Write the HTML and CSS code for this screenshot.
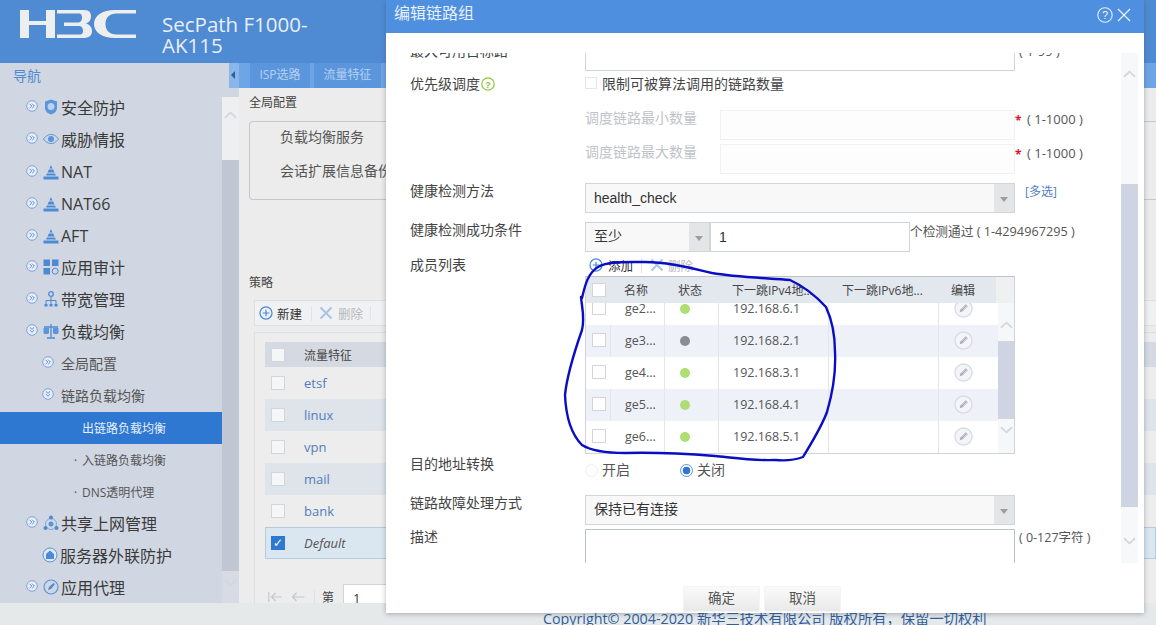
FILE: index.html
```html
<!DOCTYPE html>
<html lang="zh">
<head>
<meta charset="utf-8">
<title>编辑链路组</title>
<link rel="stylesheet" href="styles.css">
</head>
<body>
<svg class="defs" width="0" height="0">
  <defs>
    <symbol id="exp" viewBox="0 0 12 12"><circle cx="6" cy="6" r="5.3" fill="#e8edf5" stroke="#7ba6dc"/><path d="M3.6 3.8 5.8 6 3.6 8.2M6.2 3.8 8.4 6 6.2 8.2" fill="none" stroke="#5f93d6"/></symbol>
    <symbol id="col" viewBox="0 0 12 12"><circle cx="6" cy="6" r="5.3" fill="#e8edf5" stroke="#7ba6dc"/><path d="M3.8 3.4 6 5.4 8.2 3.4M3.8 6.2 6 8.2 8.2 6.2" fill="none" stroke="#5f93d6"/></symbol>
    <symbol id="fw" viewBox="0 0 16 16"><path d="M8 1 9.5 4.5H6.500ZM5.800 5.500H10.200L11.500 8.500H4.500ZM4 9.500H12L13 11.500H3ZM.5 12.500H15.500V15.500H.5Z" fill="#4c8ad6"/></symbol>
    <symbol id="pen" viewBox="0 0 20 20"><circle cx="10" cy="10" r="9" fill="#f4f5f8" stroke="#d8dce4" stroke-width="1.500"/><path d="M6 14 7 10.800 12.300 5.500 14.500 7.700 9.200 13Z" fill="#a3a9b4"/><path d="M8 10.800 12.500 6.300M9.200 11.800 13.500 7.500" stroke="#f4f5f8" stroke-width=".6"/></symbol>
    <symbol id="add" viewBox="0 0 16 16"><circle cx="8" cy="8" r="6.900" fill="none" stroke="#4a8ad4" stroke-width="1.400"/><path d="M8 4.200V11.800M4.200 8H11.800" stroke="#4a8ad4" stroke-width="1.400"/></symbol>
    <symbol id="del" viewBox="0 0 14 14"><path d="M1.500 1.500 12.500 12.500M12.500 1.500 1.500 12.500" stroke="#a9c4e6" stroke-width="2"/></symbol>
    <symbol id="up" viewBox="0 0 14 8"><path d="M1 7 7 1.500 13 7" fill="none" stroke="#d3d7de" stroke-width="2"/></symbol>
    <symbol id="down" viewBox="0 0 14 8"><path d="M1 1 7 6.500 13 1" fill="none" stroke="#d3d7de" stroke-width="2"/></symbol>
    <symbol id="first" viewBox="0 0 14 10"><path d="M.8 0V10M13.500 5H3.500M7.500 1 3.500 5 7.500 9" fill="none" stroke="#c4c8ce" stroke-width="1.200"/></symbol>
    <symbol id="prev" viewBox="0 0 14 10"><path d="M13.500 5H1.500M5.500 1 1.500 5 5.500 9" fill="none" stroke="#c4c8ce" stroke-width="1.200"/></symbol>
  </defs>
</svg>

<header class="topbar">
  <svg class="logo" viewBox="0 0 116 28" width="116" height="28">
    <path d="M0 0H9V11H26V0H35V28H26V15H9V28H0Z" fill="#eceef0"/>
    <path d="M37 0H64C70 0 71 3 71 6.500 71 10 69 12.500 66 13.500 69.500 14.500 72 17 72 21 72 25.500 69 28 63 28H37V24.500H60C62 24.500 63 23 63 21 63 18.500 62 16 59 16H44V12.500H58C61 12.500 62 10 62 7.500 62 5 61 3.500 59 3.500H37Z" fill="#eceef0"/>
    <path d="M116 3.500H97C89 3.500 85.500 8 85.500 14 85.500 20 89 24.500 97 24.500H116V28H95C82 28 74 22 74 14 74 6 82 0 95 0H116Z" fill="#eceef0"/>
  </svg>
  <div class="product">SecPath F1000-<br>AK115</div>
</header>

<div class="main">
  <nav class="sidebar">
    <div class="nav-title">导航</div>
    <ul class="nav-list">
      <li class="nav-item"><svg class="ico-exp"><use href="#exp"/></svg><svg class="ico" viewBox="0 0 16 16"><path d="M8 .5 14 2.500V9C14 12.500 11 14.500 8 15.500 5 14.500 2 12.500 2 9V2.500Z" fill="#5a94da"/><circle cx="8" cy="7.500" r="3.500" fill="#b8d2f0"/></svg>安全防护</li>
      <li class="nav-item"><svg class="ico-exp"><use href="#exp"/></svg><svg class="ico" viewBox="0 0 16 16"><path d="M.5 8C3 4.500 5.500 3.500 8 3.500S13 4.500 15.500 8C13 11.500 10.500 12.500 8 12.500S3 11.500 .5 8Z" fill="none" stroke="#5a94da"/><circle cx="8" cy="8" r="3" fill="#5a94da"/></svg>威胁情报</li>
      <li class="nav-item nav-latin"><svg class="ico-exp"><use href="#exp"/></svg><svg class="ico"><use href="#fw"/></svg>NAT</li>
      <li class="nav-item nav-latin"><svg class="ico-exp"><use href="#exp"/></svg><svg class="ico"><use href="#fw"/></svg>NAT66</li>
      <li class="nav-item nav-latin"><svg class="ico-exp"><use href="#exp"/></svg><svg class="ico"><use href="#fw"/></svg>AFT</li>
      <li class="nav-item"><svg class="ico-exp"><use href="#exp"/></svg><svg class="ico" viewBox="0 0 16 16"><path d="M.5.500H7V7H.5ZM9 .5H15.500V7H9ZM.5 9H7V15.500H.5Z" fill="#4c8ad6"/><circle cx="12.200" cy="12.200" r="3" fill="none" stroke="#4c8ad6"/></svg>应用审计</li>
      <li class="nav-item"><svg class="ico-exp"><use href="#exp"/></svg><svg class="ico" viewBox="0 0 16 16"><circle cx="8" cy="3" r="2.300" fill="none" stroke="#4c8ad6" stroke-width="1.300"/><path d="M8 5.500V9M3 13V9.500H13V13M8 9V13" fill="none" stroke="#4c8ad6"/><path d="M1.500 13H4.500V15.500H1.500ZM6.500 13H9.500V15.500H6.500ZM11.500 13H14.500V15.500H11.500Z" fill="#4c8ad6"/></svg>带宽管理</li>
      <li class="nav-item"><svg class="ico-exp"><use href="#col"/></svg><svg class="ico" viewBox="0 0 16 16"><path d="M8 1V14M4 15H12M1 4H15" stroke="#4c8ad6" stroke-width="1.300"/><path d="M.5 5H6V10C6 11.500 .5 11.500 .5 10ZM10 5H15.500V10C15.500 11.500 10 11.500 10 10Z" fill="#5a94da"/></svg>负载均衡</li>
      <li class="nav-sub"><svg class="ico-exp sub-exp"><use href="#exp"/></svg>全局配置</li>
      <li class="nav-sub"><svg class="ico-exp sub-exp"><use href="#col"/></svg>链路负载均衡</li>
      <li class="nav-leaf nav-active">出链路负载均衡</li>
      <li class="nav-leaf"><span class="dot">·</span>入链路负载均衡</li>
      <li class="nav-leaf"><span class="dot">·</span>DNS透明代理</li>
      <li class="nav-item"><svg class="ico-exp"><use href="#exp"/></svg><svg class="ico" viewBox="0 0 16 16"><circle cx="8" cy="9" r="5.500" fill="none" stroke="#7fa9de"/><circle cx="8" cy="9" r="2.500" fill="#5a94da"/><circle cx="8" cy="2.500" r="2" fill="#4c8ad6"/><circle cx="2.500" cy="13" r="2" fill="#4c8ad6"/><circle cx="13.500" cy="13" r="2" fill="#4c8ad6"/></svg>共享上网管理</li>
      <li class="nav-item nav-noexp"><svg class="ico" viewBox="0 0 16 16"><circle cx="8" cy="8" r="7" fill="#dfe8f4" stroke="#5a94da"/><path d="M8 3.500 12 7V12H4V7Z" fill="#4c8ad6"/></svg>服务器外联防护</li>
      <li class="nav-item"><svg class="ico-exp"><use href="#exp"/></svg><svg class="ico" viewBox="0 0 16 16"><circle cx="8" cy="8" r="7" fill="none" stroke="#5a94da" stroke-width="1.200"/><path d="M5 11 6 8 10.500 4 11.800 5.300 8 10Z" fill="#4c8ad6"/></svg>应用代理</li>
    </ul>
  </nav>

  <div class="side-scroll">
    <div class="ss-gap"></div>
    <div class="ss-track"><svg class="arrow"><use href="#up"/></svg></div>
    <div class="ss-thumb"></div>
    <div class="ss-end"><svg class="arrow"><use href="#down"/></svg></div>
  </div>

  <section class="workspace">
    <div class="tabs">
      <button class="tab-toggle"></button>
      <span class="tab tab-a">ISP选路</span>
      <span class="tab tab-b">流量特征</span>
    </div>
    <div class="page">
      <h3 class="sec-title">全局配置</h3>
      <div class="global-box">
        <div>负载均衡服务</div>
        <div>会话扩展信息备份</div>
      </div>
      <h3 class="sec-title policy-title">策略</h3>
      <div class="policy">
        <div class="toolbar">
          <span class="tool"><svg class="t-ico"><use href="#add"/></svg>新建</span>
          <span class="sep sep-a"></span>
          <span class="tool tool-off"><svg class="t-ico t-del"><use href="#del"/></svg>删除</span>
          <span class="sep"></span>
        </div>
        <div class="table-box">
          <div class="t-row t-head"><i class="cb"></i><span>流量特征</span></div>
          <div class="t-row"><i class="cb"></i><a>etsf</a></div>
          <div class="t-row t-alt"><i class="cb"></i><a>linux</a></div>
          <div class="t-row"><i class="cb"></i><a>vpn</a></div>
          <div class="t-row t-alt"><i class="cb"></i><a>mail</a></div>
          <div class="t-row"><i class="cb"></i><a>bank</a></div>
          <div class="t-row t-sel"><i class="cb cb-on">✓</i><em>Default</em></div>
          <div class="pager"><svg class="pg"><use href="#first"/></svg><svg class="pg"><use href="#prev"/></svg><i class="pg-sep"></i><span>第</span><span class="pg-input">1</span></div>
        </div>
      </div>
    </div>
  </section>
</div>

<footer class="footer">Copyright© 2004-2020 新华三技术有限公司 版权所有，保留一切权利</footer>

<div class="modal">
  <div class="modal-head">
    <span>编辑链路组</span>
    <span class="modal-ctl">
      <svg width="16" height="16" viewBox="0 0 16 16"><circle cx="8" cy="8" r="7.200" fill="none" stroke="#e6eefa" stroke-width="1.100"/><text x="8" y="12" class="q">?</text></svg>
      <svg width="14" height="14" viewBox="0 0 14 14"><path d="M1 1 13 13M13 1 1 13" stroke="#eef3fb" stroke-width="1.200"/></svg>
    </span>
  </div>
  <div class="modal-body">
    <div class="form-clip">
      <div class="form">
        <div class="row row-first"><label>最大可用目标路</label><div class="field"><div class="input h30 w430"></div><span class="hint">( 1-99 )</span></div></div>
        <div class="row row-pri"><label class="lab-mid">优先级调度<svg class="help" viewBox="0 0 14 14"><circle cx="7" cy="7" r="6.200" fill="none" stroke="#8cc63f" stroke-width="1.200"/><text x="7" y="10.500" class="q2">?</text></svg></label><div class="field"><i class="cb cb-light"></i><span class="check-text">限制可被算法调用的链路数量</span></div></div>
        <div class="row row-min"><div class="field"><span class="dim-label">调度链路最小数量</span><div class="input h30 w295 off"></div><span class="req">*</span><span class="hint">( 1-1000 )</span></div></div>
        <div class="row row-max"><div class="field"><span class="dim-label">调度链路最大数量</span><div class="input h30 w295 off"></div><span class="req">*</span><span class="hint">( 1-1000 )</span></div></div>
        <div class="row row-hc"><label>健康检测方法</label><div class="field"><div class="select w430"><span>health_check</span><b class="caret"></b></div><a class="multi">[多选]</a></div></div>
        <div class="row row-ok"><label>健康检测成功条件</label><div class="field"><div class="select w125"><span class="cjk-val">至少</span><b class="caret"></b></div><div class="input h30 w200 val">1</div><span class="hint hint-tight">个检测通过 ( 1-4294967295 )</span></div></div>
        <div class="row row-mem"><label>成员列表</label>
          <div class="members">
            <div class="mem-tools">
              <span class="tool"><svg class="t-ico"><use href="#add"/></svg>添加</span><span class="sep"></span>
              <span class="tool tool-off"><svg class="t-ico"><use href="#del"/></svg>删除</span>
            </div>
            <div class="grid">
              <div class="g-head">
                <i class="cb cb-head"></i><span class="c-name">名称</span><span class="c-state">状态</span><span class="c-v4">下一跳IPv4地...</span><span class="c-v6">下一跳IPv6地...</span><span class="c-edit">编辑</span><span class="c-corner"></span>
              </div>
              <div class="g-wrap">
                <div class="g-rows">
                  <div class="g-row g-first"><span class="c-chk"><i class="cb"></i></span><span class="c-name">ge2...</span><span class="c-state"><i class="led"></i></span><span class="c-v4">192.168.6.1</span><span class="c-v6"></span><span class="c-edit"><svg class="pen"><use href="#pen"/></svg></span></div>
                  <div class="g-row g-alt"><span class="c-chk"><i class="cb"></i></span><span class="c-name">ge3...</span><span class="c-state"><i class="led led-off"></i></span><span class="c-v4">192.168.2.1</span><span class="c-v6"></span><span class="c-edit"><svg class="pen"><use href="#pen"/></svg></span></div>
                  <div class="g-row"><span class="c-chk"><i class="cb"></i></span><span class="c-name">ge4...</span><span class="c-state"><i class="led"></i></span><span class="c-v4">192.168.3.1</span><span class="c-v6"></span><span class="c-edit"><svg class="pen"><use href="#pen"/></svg></span></div>
                  <div class="g-row g-alt"><span class="c-chk"><i class="cb"></i></span><span class="c-name">ge5...</span><span class="c-state"><i class="led"></i></span><span class="c-v4">192.168.4.1</span><span class="c-v6"></span><span class="c-edit"><svg class="pen"><use href="#pen"/></svg></span></div>
                  <div class="g-row"><span class="c-chk"><i class="cb"></i></span><span class="c-name">ge6...</span><span class="c-state"><i class="led"></i></span><span class="c-v4">192.168.5.1</span><span class="c-v6"></span><span class="c-edit"><svg class="pen"><use href="#pen"/></svg></span></div>
                </div>
                <div class="g-scroll">
                  <div class="gs-track"><svg class="arrow"><use href="#up"/></svg></div>
                  <div class="gs-thumb"></div>
                  <div class="gs-end"><svg class="arrow"><use href="#down"/></svg></div>
                </div>
              </div>
            </div>
          </div>
        </div>
        <div class="row row-nat"><label>目的地址转换</label><div class="field radios"><span class="radio-item"><i class="radio"></i>开启</span><span class="radio-item"><i class="radio radio-on"></i>关闭</span></div></div>
        <div class="row row-fail"><label>链路故障处理方式</label><div class="field"><div class="select w430"><span class="cjk-val">保持已有连接</span><b class="caret"></b></div></div></div>
        <div class="row row-desc"><label>描述</label><div class="field"><div class="textarea w430"></div><span class="hint hint-desc">( 0-127字符 )</span></div></div>
      </div>
      <div class="m-scroll">
        <div class="ms-track"><svg class="arrow"><use href="#up"/></svg></div>
        <div class="ms-thumb"></div>
        <div class="ms-end"><svg class="arrow"><use href="#down"/></svg></div>
      </div>
    </div>
  </div>
  <div class="modal-foot">
    <button class="btn">确定</button>
    <button class="btn">取消</button>
  </div>
</div>

<svg class="scribble" width="1156" height="625" viewBox="0 0 1156 625">
  <path d="M582 298C585 285 588 273 598 267C608 261 625 262 645 262C668 262 690 268 712 273C735 277 765 278 790 280C803 286 815 295 826 307C832 320 835 335 835 352C836 372 832 395 827 412C821 428 812 442 803 457C795 460 785 461 775 460C755 461 735 458 715 456C690 454 660 452 625 453C605 453 590 450 582 445C572 435 566 418 565 395C567 375 575 350 582 330C585 318 582 308 581 297" fill="none" stroke="#0a0dc4" stroke-width="2.400" stroke-linecap="round" stroke-linejoin="round"/>
</svg>
</body>
</html>
```
FILE: styles.css
```css
* { box-sizing: border-box; }
html, body { margin: 0; padding: 0; }
body {
  width: 1156px;
  height: 625px;
  overflow: hidden;
  display: flex;
  flex-direction: column;
  position: relative;
  background: #e6e9ea;
  color: #444;
  font: 14px "Open Sans", "Noto Sans CJK SC", sans-serif;
}
.defs { position: absolute; }
ul { list-style: none; margin: 0; padding: 0; }
h3 { margin: 0; font-weight: 400; }
i, em { display: block; }

/* top bar */
.topbar {
  flex: none;
  height: 63px;
  background: #4f8bd3;
  display: flex;
  align-items: flex-start;
  padding: 10px 0 0 20px;
}
.logo { flex: none; }
.product {
  margin: 4px 0 0 26px;
  color: #e8eef8;
  font-size: 20.500px;
  line-height: 21px;
}

/* main */
.main { flex: none; height: 540px; display: flex; overflow: hidden; }
.sidebar { flex: none; width: 222px; background: #d0d7e2; overflow: hidden; }
.nav-title { height: 29px; padding: 5px 0 0 13px; line-height: 16px; color: #4f8bd3; font-size: 14px; }
.nav-item, .nav-sub, .nav-leaf { height: 32px; display: flex; align-items: center; white-space: nowrap; }
.nav-item { padding: 0 0 2px 26px; font-size: 16px; color: #3a3a3a; }
.nav-latin { padding-bottom: 0; }
.nav-noexp { padding-left: 42px; }
.nav-sub { padding: 0 0 2px 42px; font-size: 14px; color: #555; }
.nav-leaf { padding: 2px 0 0 82px; font-size: 12px; line-height: 28px; color: #555; }
.nav-active { background: #2f78d2; color: #e6effa; }
.dot { width: 8px; margin-left: -8px; }
.ico-exp { width: 12px; height: 12px; flex: none; margin: -3px 5px 0 0; }
.sub-exp { margin-right: 7px; }
.ico { width: 16px; height: 16px; flex: none; margin-right: 2px; }

.side-scroll { flex: none; width: 17px; display: flex; flex-direction: column; background: #d0d7e2; }
.ss-gap { height: 34px; }
.ss-track { height: 63px; background: #eeeff1; padding-top: 14px; display: flex; justify-content: center; }
.ss-thumb { height: 411px; background: #c1c7d2; }
.ss-end { flex: 1; background: #d7dbe3; padding-top: 8px; display: flex; justify-content: center; }
.arrow { width: 13px; height: 8px; display: block; }

.workspace { flex: 1; display: flex; flex-direction: column; min-width: 0; }
.tabs { height: 25px; flex: none; display: flex; gap: 4px; position: relative; padding-left: 11px; background: #6ea5e6; }
.tab-toggle {
  position: absolute;
  left: -10px;
  top: 0;
  width: 10px;
  height: 25px;
  padding: 0;
  border: 0;
  background: #8ab6ea;
}
.tab-toggle::after {
  content: "";
  position: absolute;
  left: 2px;
  top: 8px;
  border: 4px solid transparent;
  border-right: 4px solid #2c5f9e;
  border-left: 0;
}
.tab {
  flex: none;
  background: #5b96dd;
  color: #b5d0f2;
  font-size: 12px;
  line-height: 24px;
  text-align: center;
}
.tab-a { width: 60px; }
.tab-b { width: 67px; }
.page { flex: 1; background: #ececec; padding: 7px 0 0 10px; overflow: hidden; }
.sec-title { font-size: 12px; line-height: 16px; color: #444; }
.global-box {
  margin-top: 10px;
  height: 79px;
  border: 1px solid #c3c8d0;
  border-right: 0;
  border-radius: 4px 0 0 4px;
  padding-left: 30px;
  display: flex;
  flex-direction: column;
  gap: 4px;
  font-size: 14px;
  line-height: 30px;
  color: #555;
  white-space: nowrap;
  overflow: hidden;
}
.policy-title { margin-top: 75px; }
.policy { margin-top: 9px; margin-left: 5px; }
.toolbar {
  height: 26px;
  display: flex;
  align-items: center;
  padding-left: 4px;
  background: #f0f1f2;
  border: 1px solid #dcdfe4;
  border-right: 0;
}
.tool { display: flex; align-items: center; font-size: 12.500px; color: #333; white-space: nowrap; }
.tool-off { color: #b5b8bd; }
.t-ico { width: 14px; height: 14px; margin-right: 4px; flex: none; }
.t-del { margin-right: 5px; }
.sep { width: 1px; height: 15px; background: #e0e3e8; margin: 0 7px; flex: none; }
.sep-a { margin-left: 9px; }
.table-box { margin-top: 6px; border: 1px solid #dcdfe4; border-right: 0; padding: 9px 0 0 10px; height: 300px; background: #ededed; }
.t-row { height: 32px; display: flex; align-items: center; padding-left: 6px; font-size: 13px; white-space: nowrap; }
.t-head { height: 25px; background: #d5dae2; color: #444; font-size: 12px; }
.t-row span, .t-row a, .t-row em { margin-left: 19px; }
.t-row a { color: #4f7fba; }
.t-alt { background: #dfe3ea; }
.t-sel { background: #dbe7f0; border: 1px solid #b4cbe0; padding-left: 5px; font-size: 13px; color: #555; }
.cb {
  width: 14px;
  height: 14px;
  flex: none;
  background: #f5f6f7;
  border: 1px solid #d2d5da;
}
.cb-on {
  background: #2f78d2;
  border: 0;
  color: #fff;
  font: 700 12px/14px "DejaVu Sans", sans-serif;
  text-align: center;
  font-style: normal;
}
.pager { display: flex; align-items: center; margin-top: 25px; color: #444; font-size: 12px; padding-left: 3px; white-space: nowrap; }
.pg { width: 14px; height: 10px; flex: none; margin-right: 9px; }
.pg-sep { width: 1px; height: 14px; background: #dfe1e5; flex: none; margin-right: 7px; }
.pager span { flex: none; }
.pg-input { width: 60px; height: 26px; margin-left: 9px; padding: 4px 9px; background: #fff; border: 1px solid #cfd3da; color: #333; font-size: 13px; }

.footer {
  flex: none;
  height: 22px;
  padding: 7px 0 0 543px;
  line-height: 18px;
  font-size: 14.300px;
  color: #2f5f9e;
  white-space: nowrap;
}

/* modal */
.modal {
  position: absolute;
  left: 386px;
  top: 0;
  width: 758px;
  height: 613px;
  background: #fff;
  box-shadow: 0 1px 5px rgba(60, 70, 90, .4);
  display: flex;
  flex-direction: column;
}
.modal-head {
  flex: none;
  height: 33px;
  background: #4f8fdf;
  color: #e8f0fb;
  font-size: 16px;
  line-height: 26px;
  padding: 0 13px 0 8px;
  display: flex;
  justify-content: space-between;
  align-items: flex-start;
}
.modal-ctl { display: flex; align-items: center; gap: 4px; padding-top: 7px; }
.q { fill: #eef3fb; font: 11px "Liberation Sans", sans-serif; text-anchor: middle; }
.q2 { fill: #8cc63f; font: 700 9.500px "Liberation Sans", sans-serif; text-anchor: middle; }
.modal-body { flex: none; height: 530px; padding-top: 20px; }
.form-clip { height: 510px; overflow: hidden; display: flex; position: relative; }
.form { flex: none; width: 735px; padding-left: 24px; margin-top: -12px; }
.row { display: flex; position: relative; }
.row > label { flex: none; width: 175px; font-size: 14px; line-height: 18px; color: #444; white-space: nowrap; }
.row > .lab-mid { display: flex; align-items: center; align-self: flex-start; }
.help { width: 14px; height: 14px; margin-left: 1px; }
.field { display: flex; align-items: flex-start; min-width: 0; }
.row-first { height: 30px; margin-bottom: 4px; }
.row-first > label { margin-top: 1px; }
.row-pri { height: 35px; }
.row-min, .row-max { height: 34px; padding-left: 175px; }
.row-max { height: 39px; }
.row-hc { height: 39px; }
.row-hc > label { margin-top: -1px; }
.row-ok { height: 43px; }
.row-ok > label { margin-top: -1px; }
.row-mem { height: 190px; }
.row-mem > label { margin-top: -9px; }
.row-nat { height: 40px; }
.row-nat .field { padding-top: 8px; }
.row-fail { height: 34px; }
.row-fail > label { margin-top: -1px; }
.row-desc { height: 60px; }
.row-desc > label { margin-top: -1px; }
.input { border: 1px solid #cfd4dd; background: #fff; flex: none; }
.off { border-color: #f0f1f3; background: #fdfdfd; }
.h30 { height: 30px; }
.w430 { width: 430px; }
.w295 { width: 295px; }
.w200 { width: 200px; }
.w125 { width: 125px; }
.val { font: 14px/28px "Liberation Sans", sans-serif; padding-left: 8px; color: #333; }
.hint { font-size: 13px; line-height: 18px; color: #555; padding-left: 4px; white-space: nowrap; }
.hint-tight { padding-left: 0; font-size: 12.700px; }
.hint-desc { font-size: 12.500px; padding-left: 4px; }
.row-first .hint { margin-top: 1px; }
.req { color: #e0102a; font-weight: 700; width: 8px; line-height: 18px; font-size: 12px; margin-top: 2px; }
.row-min .hint, .row-max .hint { padding-left: 4px; }
.cb-light { margin-top: 2px; width: 12px; height: 12px; background: #fff; border-color: #e4e6ea; }
.check-text { margin-left: 5px; font-size: 14px; line-height: 18px; color: #444; }
.dim-label { width: 135px; font-size: 14px; line-height: 16px; color: #c0c3c8; flex: none; }
.select {
  flex: none;
  height: 30px;
  display: flex;
  justify-content: space-between;
  background: #f8f8f9;
  border: 1px solid #cfd4dd;
  position: relative;
}
.select span { padding-left: 8px; font: 14px/28px "Liberation Sans", sans-serif; color: #333; }
.select .cjk-val { font-family: "Noto Sans CJK SC", sans-serif; line-height: 25px; }
.caret {
  width: 20px;
  background: #e4e5e7;
  position: relative;
}
.caret::after {
  content: "";
  position: absolute;
  left: 6px;
  top: 13px;
  border: 4px solid transparent;
  border-top: 5px solid #9a9ea4;
  border-bottom: 0;
}
.multi { margin-left: 10px; font-size: 12px; line-height: 18px; color: #5080c4; }
.members { width: 430px; }
.mem-tools { height: 18px; display: flex; align-items: center; padding-left: 4px; margin-top: -9px; margin-bottom: 2px; }
.mem-tools .t-ico { margin-right: 5px; }
.mem-tools .sep { margin: 0 8px; }
.mem-tools .tool-off .t-ico { margin-right: 4px; }
.grid { height: 178px; border: 1px solid #cfd2d8; border-top-color: #bfc3ca; display: flex; flex-direction: column; background: #fff; }
.g-head { flex: none; height: 26px; display: flex; align-items: center; background: #e3e8ef; color: #444; font-size: 12px; position: relative; }
.cb-head { margin-left: 6px; flex: none; background: #fff; }
.g-head span { flex: none; white-space: nowrap; }
.g-head .c-name { width: 54px; margin-left: 18px; }
.g-head .c-state { width: 54px; }
.g-head .c-v4 { width: 110px; }
.g-head .c-v6 { width: 109px; }
.g-head .c-edit { width: 45px; }
.g-head .c-corner { flex: 1; align-self: stretch; background: #eef0f2; }
.g-wrap { flex: 1; display: flex; min-height: 0; }
.g-rows { width: 412px; overflow: hidden; }
.g-row { height: 32px; display: flex; align-items: center; font-size: 12.500px; color: #555; }
.g-first { margin-top: -10px; }
.g-alt { background: #eef1f7; }
.g-row > span { height: 100%; display: flex; align-items: center; flex: none; padding-bottom: 2px; }
.c-chk { width: 25px; padding-left: 6px; }
.g-row .cb { background: #fff; }
.g-alt .c-chk { border-right: 1px solid #e3e6ec; }
.g-row .c-name { width: 53px; padding-left: 14px; }
.g-row .c-state { width: 54px; padding: 0 0 0 15px; border-left: 1px solid #e4e6ea; }
.g-row .c-v4 { width: 110px; padding-left: 14px; border-left: 1px solid #e4e6ea; }
.g-row .c-v6 { width: 110px; border-left: 1px solid #e4e6ea; }
.g-row .c-edit { width: 60px; padding-left: 15px; border-left: 1px solid #e4e6ea; }
.led { width: 10px; height: 10px; border-radius: 50%; background: #aedd75; }
.led-off { background: #8a8d92; }
.pen { width: 19px; height: 19px; }
.g-scroll { flex: 1; display: flex; flex-direction: column; }
.gs-track { height: 38px; background: #f6f7f9; padding-top: 18px; display: flex; justify-content: center; }
.gs-thumb { height: 78px; background: #ced4e2; }
.gs-end { flex: 1; padding-top: 7px; background: #f6f7f9; display: flex; justify-content: center; }
.radios { gap: 50px; }
.radio-item { display: flex; align-items: center; font-size: 14px; color: #555; line-height: 14px; }
.radio { width: 13px; height: 13px; margin-right: 4px; border-radius: 50%; border: 1px solid #eceef1; background: #fff; }
.radio-on { border: 1px solid #5a94da; background: radial-gradient(circle, #2f78d2 0 3.500px, #fff 4.200px); }
.textarea { height: 60px; border: 1px solid #bcc2cc; background: #fff; flex: none; }
.m-scroll { flex: none; width: 17px; display: flex; flex-direction: column; }
.ms-track { height: 131px; background: #f7f8f9; padding-top: 17px; display: flex; justify-content: center; }
.ms-thumb { height: 323px; background: #ced4e2; }
.ms-end { flex: 1; background: #f7f8f9; padding-top: 30px; display: flex; justify-content: center; }
.modal-foot { flex: 1; display: flex; justify-content: center; gap: 6px; padding: 24px 6px 0 0; }
.btn {
  width: 75px;
  height: 24px;
  padding: 0 0 4px;
  border: 0;
  background: linear-gradient(#fafafa, #e9e9e9);
  box-shadow: 0 0 1px #bbb;
  font: 13.500px "Open Sans", "Noto Sans CJK SC", sans-serif;
  color: #555;
}

/* hand-drawn annotation on top of the screenshot */
.scribble { position: absolute; left: 0; top: 0; pointer-events: none; }
```
